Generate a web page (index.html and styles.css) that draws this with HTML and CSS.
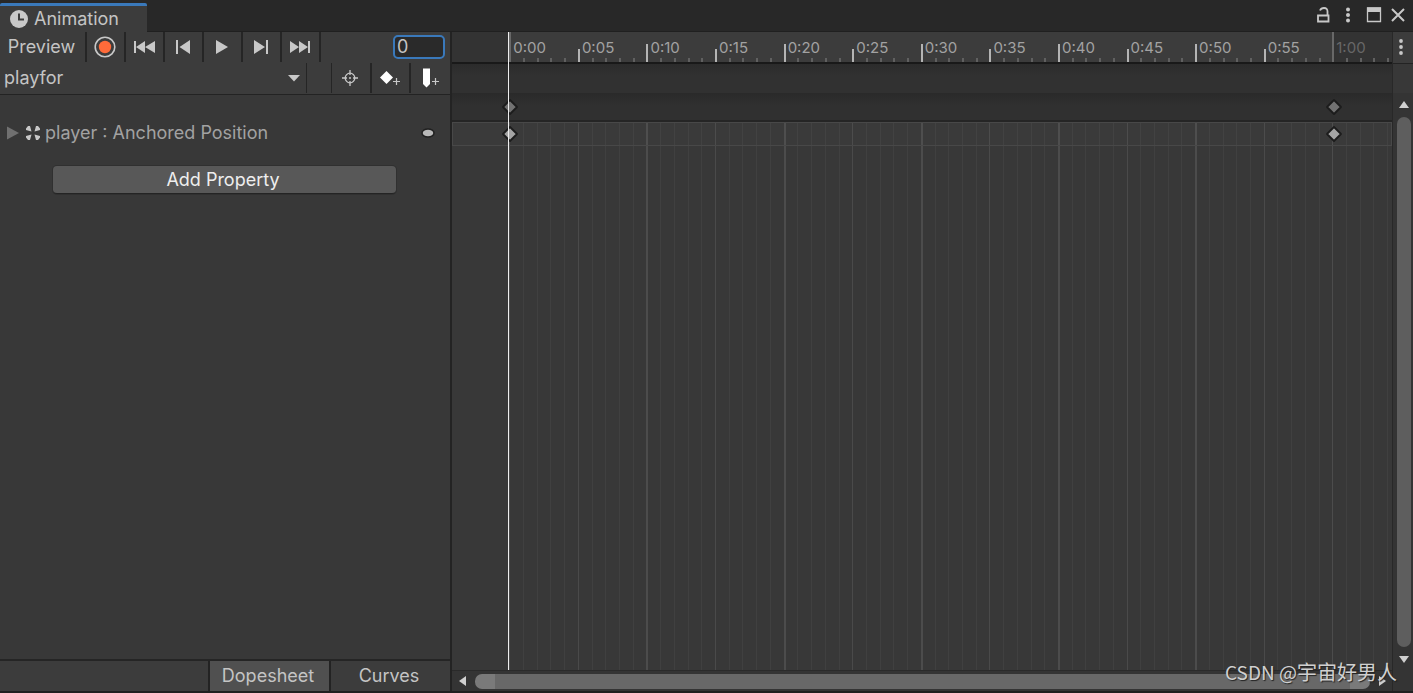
FILE: index.html
```html
<!DOCTYPE html>
<html lang="en">
<head>
<meta charset="utf-8">
<title>Animation</title>
<link rel="stylesheet" href="styles.css">
</head>
<body>
<div class="window">
  <header class="titlebar">
    <div class="tab">
      <svg class="tab-icon" width="18" height="18" viewBox="0 0 18 18" aria-hidden="true"><circle cx="9" cy="9" r="9" fill="#c8c8c8"/><path d="M9 3.500V9.500H14" fill="none" stroke="#3c3c3c" stroke-width="2"/></svg>
      <span>Animation</span>
    </div>
    <div class="window-controls">
      <button class="icon-button" aria-label="Lock"><svg width="14" height="16" viewBox="0 0 14 16"><path d="M2 8.500H12.500V14.500H2ZM11.500 8V4.500Q11.500 1 8 1Q5 1 4 3.500" fill="none" stroke="#c8c8c8" stroke-width="1.800"/></svg></button>
      <button class="icon-button" aria-label="Menu"><svg width="6" height="16" viewBox="0 0 6 16" fill="#c8c8c8"><circle cx="3" cy="2.500" r="2"/><circle cx="3" cy="8" r="2"/><circle cx="3" cy="13.500" r="2"/></svg></button>
      <button class="icon-button" aria-label="Maximize"><svg width="16" height="16" viewBox="0 0 16 16"><path d="M1.500 1H14.500V14.500H1.500Z" fill="none" stroke="#c8c8c8" stroke-width="1.300"/><path d="M1 .500H15V5H1Z" fill="#c8c8c8"/></svg></button>
      <button class="icon-button" aria-label="Close"><svg width="14" height="16" viewBox="0 0 14 16"><path d="M1 2L13 14M13 2L1 14" stroke="#c8c8c8" stroke-width="2"/></svg></button>
    </div>
  </header>

  <main class="workspace">
    <section class="sidebar">
      <div class="toolbar">
        <button class="tool preview">Preview</button>
        <button class="tool" aria-label="Record"><svg width="22" height="22" viewBox="0 0 22 22"><circle cx="11" cy="11" r="9.800" fill="none" stroke="#c8c8c8" stroke-width="1.600"/><circle cx="11" cy="11" r="6.200" fill="#ff6b3a"/></svg></button>
        <button class="tool" aria-label="First frame"><svg width="22" height="14" viewBox="0 0 22 14" fill="#c8c8c8"><path d="M1 1H3V13H1ZM12 1V13L3 7ZM22 1V13L12 7Z"/></svg></button>
        <button class="tool" aria-label="Previous key"><svg width="16" height="14" viewBox="0 0 16 14" fill="#c8c8c8"><path d="M1 0H3V14H1ZM15 0V14L4.500 7Z"/></svg></button>
        <button class="tool" aria-label="Play"><svg width="14" height="16" viewBox="0 0 14 16" fill="#c8c8c8"><path d="M1 1L13 8L1 15Z"/></svg></button>
        <button class="tool" aria-label="Next key"><svg width="16" height="14" viewBox="0 0 16 14" fill="#c8c8c8"><path d="M13 0H15V14H13ZM1 0V14L12 7Z"/></svg></button>
        <button class="tool" aria-label="Last frame"><svg width="22" height="14" viewBox="0 0 22 14" fill="#c8c8c8"><path d="M19 1H21V13H19ZM1 1V13L10 7ZM10 1V13L19 7Z"/></svg></button>
        <input class="frame-input" type="text" value="0" aria-label="Frame">
      </div>
      <div class="toolbar clip-bar">
        <button class="clip-select"><span>playfor</span><svg width="12" height="8" viewBox="0 0 12 8"><path d="M0 1H12L6 7.500Z" fill="#c8c8c8"/></svg></button>
        <button class="tool" aria-label="Filter by selection"><svg width="18" height="18" viewBox="0 0 18 18" fill="none" stroke="#c8c8c8" stroke-width="1.300"><circle cx="9" cy="9" r="4.800"/><path d="M9 1V6M9 12V17M1 9H6M12 9H17"/><circle cx="9" cy="9" r="1" fill="#c8c8c8" stroke="none"/></svg></button>
        <button class="tool" aria-label="Add keyframe"><svg width="22" height="20" viewBox="0 0 22 20"><path d="M7.500 3L14 9.500L7.500 16L1 9.500Z" fill="#fff"/><path d="M17.500 10V17M14 13.500H21" stroke="#c8c8c8" stroke-width="1.200"/></svg></button>
        <button class="tool" aria-label="Add event"><svg width="20" height="20" viewBox="0 0 20 20"><path d="M3 .500H10V16L6.500 19.500L3 16Z" fill="#fff"/><path d="M15.500 10V17M12 13.500H19" stroke="#c8c8c8" stroke-width="1.200"/></svg></button>
      </div>
      <div class="properties">
        <div class="property">
          <button class="icon-button" aria-label="Expand"><svg width="12" height="14" viewBox="0 0 12 14"><path d="M0 .500L12 7L0 13.500Z" fill="#707070"/></svg></button>
          <svg class="property-icon" width="16" height="16" viewBox="0 0 16 16" fill="#c8c8c8" aria-hidden="true"><path d="M1 3.500L3 1H5L6.500 6.500L1 5ZM15 3.500L13 1H11L9.500 6.500L15 5ZM1 12.500L3 15H5L6.500 9.500L1 11ZM15 12.500L13 15H11L9.500 9.500L15 11Z"/></svg>
          <span>player : Anchored Position</span>
          <button class="icon-button property-menu" aria-label="Property options"><svg width="14" height="10" viewBox="0 0 14 10"><ellipse cx="7" cy="5" rx="6" ry="4" fill="#b8b8b8" stroke="#202020" stroke-width="1.500"/></svg></button>
        </div>
        <button class="add-property">Add Property</button>
      </div>
      <div class="mode-bar">
        <button class="mode active">Dopesheet</button>
        <button class="mode">Curves</button>
      </div>
    </section>

    <section class="timeline">
      <div class="ruler segments" id="ruler"></div>
      <div class="event-row"></div>
      <div class="summary-row"><svg class="key start" width="18" height="18" viewBox="0 0 18 18"><path d="M9 2L16 9L9 16L2 9Z" fill="#727272" stroke="#1c1c1c" stroke-width="1.800" stroke-linejoin="round"/></svg><svg class="key end" width="18" height="18" viewBox="0 0 18 18"><path d="M9 2L16 9L9 16L2 9Z" fill="#727272" stroke="#1c1c1c" stroke-width="1.800" stroke-linejoin="round"/></svg></div>
      <div class="sheet">
        <div class="grid-lines segments" id="grid"></div>
        <div class="dope-row"><svg class="key start" width="18" height="18" viewBox="0 0 18 18"><path d="M9 2L16 9L9 16L2 9Z" fill="#a4a4a4" stroke="#1c1c1c" stroke-width="1.800" stroke-linejoin="round"/></svg><svg class="key end" width="18" height="18" viewBox="0 0 18 18"><path d="M9 2L16 9L9 16L2 9Z" fill="#a4a4a4" stroke="#1c1c1c" stroke-width="1.800" stroke-linejoin="round"/></svg></div>
      </div>
      <div class="playhead"></div>
    </section>

    <aside class="side-rail">
      <button class="icon-button rail-menu" aria-label="Timeline options"><svg width="6" height="16" viewBox="0 0 6 16" fill="#c8c8c8"><circle cx="3" cy="2" r="1.900"/><circle cx="3" cy="8" r="1.900"/><circle cx="3" cy="14" r="1.900"/></svg></button>
      <div class="rail-space"></div>
      <div class="v-scroll">
        <svg width="10" height="7" viewBox="0 0 10 7"><path d="M0 7L5 0L10 7Z" fill="#d0d0d0"/></svg>
        <div class="v-thumb"></div>
        <svg width="10" height="7" viewBox="0 0 10 7"><path d="M0 0H10L5 7Z" fill="#d0d0d0"/></svg>
      </div>
    </aside>

    <div class="h-scroll">
      <svg width="7" height="10" viewBox="0 0 7 10"><path d="M7 0V10L0 5Z" fill="#d0d0d0"/></svg>
      <div class="h-thumb"></div>
      <svg width="7" height="10" viewBox="0 0 7 10"><path d="M0 0V10L7 5Z" fill="#d0d0d0"/></svg>
    </div>
  </main>
  <div class="watermark">CSDN @<span class="watermark-name">宇宙好男人</span></div>
</div>
<script src="timeline.js"></script>
</body>
</html>
```
FILE: styles.css
```css
* { box-sizing: border-box; }

body {
  margin: 0;
  background: #383838;
  color: #c4c4c4;
  font: 18px/24px Inter, "Noto Sans CJK SC", sans-serif;
}

button, input { font: inherit; color: inherit; }
button { padding: 0; border: 0; background: none; }
svg { display: block; flex: none; }

.window {
  position: relative;
  display: flex;
  flex-direction: column;
  height: 100vh;
  border-bottom: 2px solid #202020;
  overflow: hidden;
}

.titlebar {
  display: flex;
  justify-content: space-between;
  flex: none;
  height: 32px;
  padding-top: 3px;
  background: #282828;
  border-bottom: 1px solid #202020;
}

.tab {
  display: flex;
  align-items: center;
  gap: 6px;
  width: 147px;
  height: 29px;
  padding-left: 10px;
  background: #3c3c3c;
  border-top: 3px solid #3a79bb;
  border-radius: 2px 2px 0 0;
}

.window-controls {
  display: flex;
  align-items: center;
  gap: 15px;
  padding: 0 8px 4px 0;
}
.window-controls .icon-button:last-child { margin-left: -6px; }

.icon-button { display: flex; align-items: center; justify-content: center; }

.workspace {
  flex: 1;
  min-height: 0;
  display: grid;
  grid-template-columns: 452px 1fr 21px;
  grid-template-rows: 1fr 21px;
}

.sidebar {
  grid-row: 1 / 3;
  display: flex;
  flex-direction: column;
  border-right: 2px solid #232323;
}

.toolbar {
  display: flex;
  flex: none;
  height: 31px;
  padding-bottom: 1px;
  background: #3c3c3c;
}

.tool {
  display: flex;
  align-items: center;
  justify-content: center;
  width: 39px;
  padding-right: 2px;
  border-right: 2px solid #252525;
}

.preview { width: 87px; }
.frame-input {
  width: 52px;
  height: 24px;
  margin: 3px 5px 0 auto;
  padding: 0 2px;
  background: #2a2a2a;
  border: 2px solid #3a79bb;
  border-radius: 5px;
}

.clip-bar { height: 32px; border-bottom: 1px solid #232323; }
.clip-select {
  display: flex;
  align-items: center;
  justify-content: space-between;
  width: 307px;
  margin-right: auto;
  padding: 0 6px 0 4px;
  border-right: 1px solid #252525;
}
.clip-bar .tool:nth-child(2) { width: 41px; border-left: 1px solid #252525; }
.clip-bar .tool:last-child { border-right: 0; }

.properties { flex: 1; }
.property {
  display: flex;
  align-items: center;
  height: 26px;
  margin-top: 25px;
  padding: 0 15px 0 7px;
  color: #a2a2a2;
}
.property-icon { margin: 0 4px 0 6px; }
.property-menu { margin-left: auto; }

.add-property {
  display: block;
  width: 343px;
  height: 28px;
  margin: 20px 0 0 53px;
  padding-right: 3px;
  background: #585858;
  border-bottom: 1px solid #242424;
  border-radius: 4px;
  box-shadow: 0 0 0 1px #303030;
  color: #eee;
}

.mode-bar {
  display: flex;
  justify-content: flex-end;
  height: 32px;
  background: #3c3c3c;
  border-top: 2px solid #252525;
}
.mode { width: 121px; padding-right: 3px; border-left: 2px solid #232323; }
.mode.active { background: #505050; }

.timeline {
  position: relative;
  display: flex;
  flex-direction: column;
  min-width: 0;
  overflow: hidden;
}

.segments {
  display: flex;
  padding-left: 6.1%;
  overflow: hidden;
}
.segment {
  flex: none;
  position: relative;
  display: grid;
  grid-template-columns: repeat(5, 1fr);
  align-items: end;
  width: 7.77%;
}

.ruler {
  flex: none;
  height: 32px;
  background: linear-gradient(90deg, #333 6.1%, #3c3c3c 6.1% 93.7%, #333 93.7%);
  border-bottom: 2px solid #191919;
}
.ruler .tick { height: 4px; border-left: 2px solid #606060; }
.ruler .tick.major { height: 13px; border-color: #b4b4b4; }
.ruler .tick.ten { height: 18px; }
.ruler .tick.edge { height: 30px; border-color: #686868; }
.time {
  position: absolute;
  top: 6px;
  left: 4px;
  font-size: 15px;
  line-height: 20px;
  color: #a2a2a2;
}
.time.outside { color: #676767; }

.event-row {
  flex: none;
  height: 29px;
  background: linear-gradient(#2b2b2b, #313131 12px);
}
.summary-row {
  position: relative;
  flex: none;
  height: 29px;
  background: linear-gradient(#2a2a2a, #303030 12px);
  border-bottom: 2px solid #252525;
}

.sheet { position: relative; flex: 1; display: flex; flex-direction: column; }
.grid-lines { flex: 1; }
.grid-lines .segment { align-items: stretch; }
.grid-lines .tick { border-left: 1px solid #404040; }
.grid-lines .major { border-color: #4a4a4a; }
.grid-lines .ten { border-left: 2px solid #4c4c4c; }
.grid-lines .edge { border-left-width: 1px; }

.dope-row {
  position: absolute;
  inset: 0 0 auto;
  height: 24px;
  box-shadow: inset 0 0 0 1px #484848;
  background: rgba(255, 255, 255, 0.01);
}
.key { position: absolute; top: 5px; transform: translateX(-50%); }
.dope-row .key { top: 3px; }
.key.start { left: 6.2%; }
.key.end { left: 93.8%; }
.playhead {
  position: absolute;
  top: 0;
  bottom: 0;
  left: 6%;
  width: 1px;
  background: #eee;
}

.side-rail {
  display: flex;
  flex-direction: column;
  grid-row: 1 / 3;
  grid-column: 3;
  border-left: 1px solid #282828;
}
.rail-menu { flex: none; height: 32px; padding: 0 4px 2px 0; border-bottom: 1px solid #232323; background: #3c3c3c; }
.rail-space { flex: none; height: 29px; }
.v-scroll {
  flex: 1;
  display: flex;
  flex-direction: column;
  align-items: center;
  gap: 9px;
  padding: 8px 0 28px 2px;
  background: #343434;
}
.v-thumb { flex: 1; width: 14px; border-radius: 7px; background: #5e5e5e; }

.h-scroll {
  display: flex;
  align-items: center;
  gap: 9px;
  grid-column: 2;
  padding: 0 6px 0 7px;
  background: #343434;
  border-top: 1px solid #2a2a2a;
}
.h-thumb {
  flex: 1;
  height: 15px;
  border: solid #7a7a7a;
  border-width: 0 20px;
  border-radius: 7px;
  background: #686868;
}

.watermark {
  position: absolute;
  right: 16px;
  bottom: 5px;
  font: 19px/28px "Noto Sans CJK SC", sans-serif;
  color: #d0d0d0;
  text-shadow: 1px 1px 1px #222;
}
.watermark-name { font-size: 20px; }
```
FILE: timeline.js
```js
const FRAMES_PER_SEGMENT = 5;
const SEGMENT_COUNT = 13;
const CLIP_LENGTH = 60;

function buildSegments(container, withLabels) {
  for (let s = 0; s < SEGMENT_COUNT; s++) {
    const frame = s * FRAMES_PER_SEGMENT;
    const segment = document.createElement("div");
    segment.className = "segment";
    for (let i = 0; i < FRAMES_PER_SEGMENT; i++) {
      const tick = document.createElement("div");
      tick.className = "tick";
      if (i === 0) {
        tick.classList.add("major");
        if (frame % 10 === 0) tick.classList.add("ten");
        if (frame % CLIP_LENGTH === 0) tick.classList.add("edge");
      }
      segment.append(tick);
    }
    if (withLabels) {
      const label = document.createElement("span");
      label.className = frame < CLIP_LENGTH ? "time" : "time outside";
      label.textContent = Math.floor(frame / 60) + ":" + String(frame % 60).padStart(2, "0");
      segment.append(label);
    }
    container.append(segment);
  }
}

buildSegments(document.getElementById("ruler"), true);
buildSegments(document.getElementById("grid"), false);
```
